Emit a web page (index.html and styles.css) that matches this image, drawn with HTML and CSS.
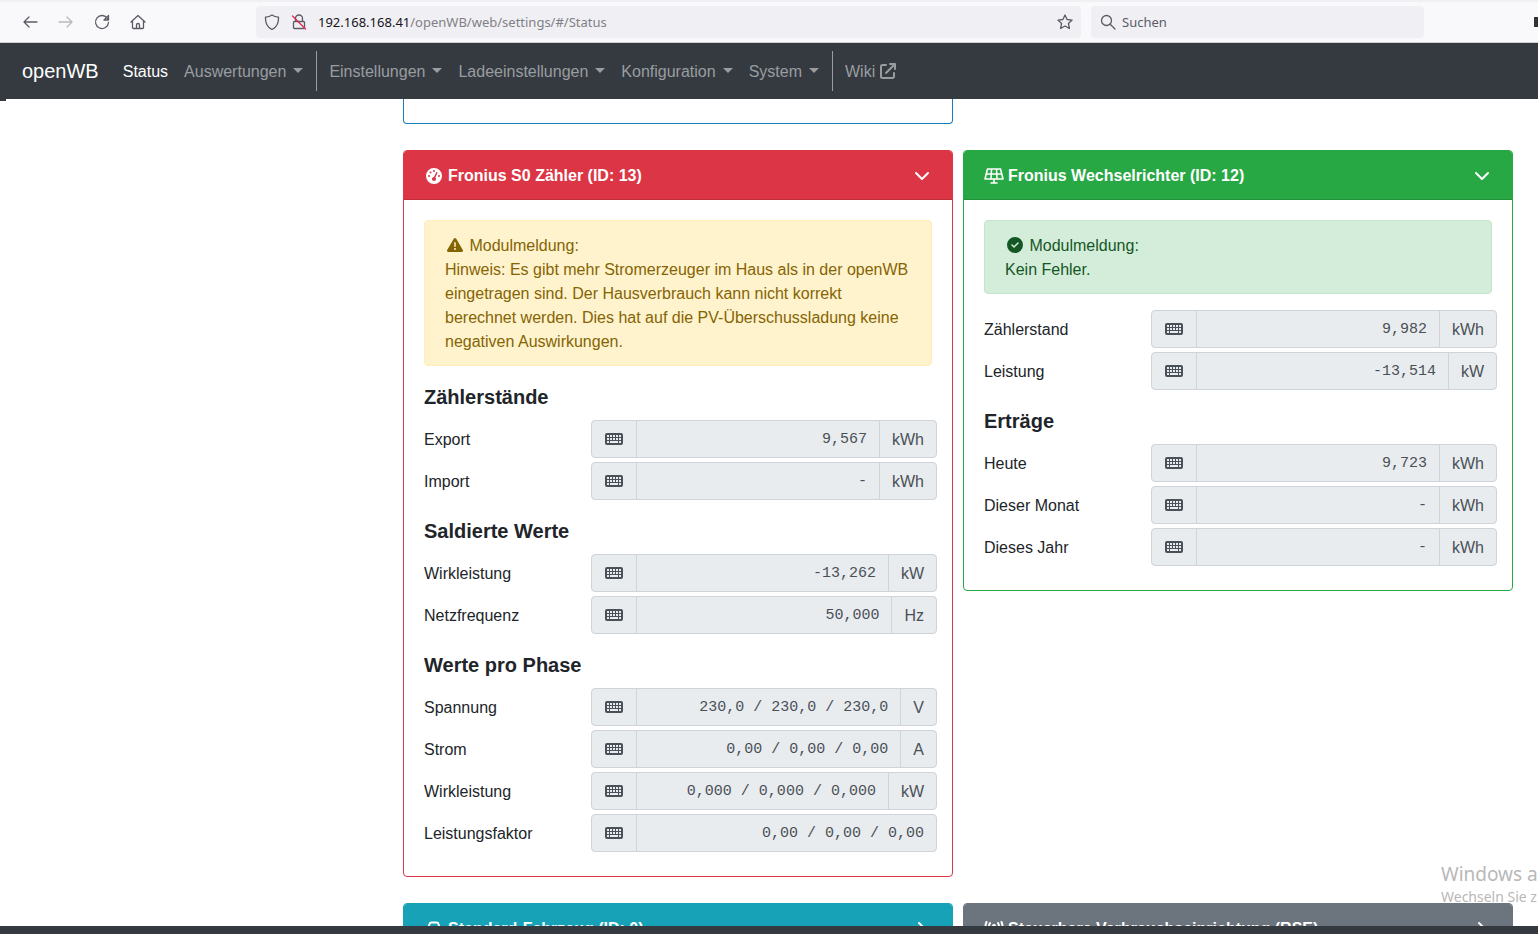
FILE: index.html
```
<!DOCTYPE html>
<html lang="de">
<head>
    <meta charset="UTF-8">
    <meta name="viewport" content="width=device-width, initial-scale=1.0">
    <title>openWB - Status</title>
    <link rel="stylesheet" href="styles.css">
</head>
<body>

    <!-- shared icons -->
    <svg class="sprite" aria-hidden="true">
        <symbol id="keyboard" viewBox="0 0 18 12">
            <path fill-rule="evenodd" d="M2 0h14a2 2 0 0 1 2 2v8a2 2 0 0 1-2 2H2a2 2 0 0 1-2-2V2a2 2 0 0 1 2-2zM2 2v2h2V2zM5 2v2h2V2zM8 2v2h2V2zM11 2v2h2V2zM14 2v2h2V2zM2 5v2h2V5zM5 5v2h2V5zM8 5v2h2V5zM11 5v2h2V5zM14 5v2h2V5zM2 8v2h2V8zM5 8v2h8V8zM14 8v2h2V8z"/>
        </symbol>
        <symbol id="chevron-down" viewBox="0 0 16 16">
            <path d="M2 5l6 6 6-6" fill="none" stroke="currentColor" stroke-width="2" stroke-linecap="round" stroke-linejoin="round"/>
        </symbol>
        <symbol id="chevron-right" viewBox="0 0 16 16">
            <path d="M5 2l6 6-6 6" fill="none" stroke="currentColor" stroke-width="2" stroke-linecap="round" stroke-linejoin="round"/>
        </symbol>
    </svg>

    <div class="toolbar">
        <button class="tool" aria-label="Zurück"><svg viewBox="0 0 16 16"><path d="M15 8H2M7 3L2 8l5 5"/></svg></button>
        <button class="tool" aria-label="Vor" disabled><svg viewBox="0 0 16 16"><path d="M1 8h13M9 3l5 5-5 5"/></svg></button>
        <button class="tool" aria-label="Neu laden"><svg viewBox="0 0 16 16"><path d="M13.500 4.500a6.500 6.500 0 1 0 1 4M14.500 1.500v4.500H10z"/></svg></button>
        <button class="tool" aria-label="Startseite"><svg viewBox="0 0 16 16"><path d="M1 8l7-6.500L15 8M2.500 7v6.500a1 1 0 0 0 1 1h9a1 1 0 0 0 1-1V7M6.500 14.500V11a1.500 1.500 0 0 1 3 0v3.500"/></svg></button>
        <div class="urlbar">
            <svg viewBox="0 0 16 16"><path d="M8 1c2 1.500 4 2 6.500 2.200C14.800 9 12.500 13.500 8 15.500 3.500 13.500 1.200 9 1.500 3.200 4 3 6 2.500 8 1z"/></svg>
            <svg viewBox="0 0 16 16"><path d="M4.500 7V4.500a3.500 3.500 0 0 1 7 0V7M3.500 7.500h9a1 1 0 0 1 1 1v5a1 1 0 0 1-1 1h-9a1 1 0 0 1-1-1v-5a1 1 0 0 1 1-1z"/><path class="strike" d="M1.500 2l13 13"/></svg>
            <div class="url" role="textbox" aria-label="Adresse" contenteditable="true" spellcheck="false"><b>192.168.168.41</b>/openWB/web/settings/#/Status</div>
            <button class="star" aria-label="Lesezeichen"><svg viewBox="0 0 16 16"><path d="M8 1l2.100 4.500 5 .6-3.700 3.400 1 5L8 12l-4.400 2.500 1-5L.9 6.100l5-.6z"/></svg></button>
        </div>
        <div class="search">
            <svg viewBox="0 0 16 16"><circle cx="6.500" cy="6.500" r="5"/><path d="M10.200 10.200L15 15"/></svg>
            <input type="text" placeholder="Suchen" aria-label="Suchen">
        </div>
        <span class="pocket"></span>
    </div>

    <nav class="navbar">
        <a class="brand" href="#">openWB</a>
        <a class="active" href="#/Status">Status</a>
        <a class="dropdown" href="#">Auswertungen</a>
        <span class="divider"></span>
        <a class="dropdown" href="#">Einstellungen</a>
        <a class="dropdown" href="#">Ladeeinstellungen</a>
        <a class="dropdown" href="#">Konfiguration</a>
        <a class="dropdown" href="#">System</a>
        <span class="divider"></span>
        <a href="#">Wiki <svg viewBox="0 0 16 16"><path d="M6 2H2.500A1.500 1.500 0 0 0 1 3.500v10A1.500 1.500 0 0 0 2.500 15h10a1.500 1.500 0 0 0 1.500-1.500V10M10 1h5v5M14.500 1.500L6 10"/></svg></a>
    </nav>

    <main class="content">
        <div class="cards">
            <section class="card blue"></section>
            <span></span>

            <section class="card red">
                <button class="card-header">
                    <svg class="icon" viewBox="0 0 512 512"><path fill-rule="evenodd" d="M0 256a256 256 0 1 1 512 0A256 256 0 1 1 0 256zM288 96a32 32 0 1 0 -64 0 32 32 0 1 0 64 0zM256 416c35.3 0 64-28.7 64-64c0-17.4-6.9-33.1-18.1-44.6L366 161.7c5.3-12.1-.2-26.3-12.3-31.6s-26.3 .2-31.6 12.3L257.9 288c-.6 0-1.3 0-1.9 0c-35.3 0-64 28.7-64 64s28.7 64 64 64zM176 144a32 32 0 1 0 -64 0 32 32 0 1 0 64 0zM96 288a32 32 0 1 0 0-64 32 32 0 1 0 0 64zm352-32a32 32 0 1 0 -64 0 32 32 0 1 0 64 0z"/></svg>
                    <span>Fronius S0 Zähler (ID: 13)</span>
                    <svg class="chevron"><use href="#chevron-down"/></svg>
                </button>
                <div class="card-body">
                    <div class="alert warning">
                        <svg class="icon" viewBox="0 0 512 512"><path fill-rule="evenodd" d="M256 32c14.2 0 27.3 7.5 34.5 19.8l216 368c7.3 12.4 7.3 27.7 .2 40.1S486.3 480 472 480L40 480c-14.3 0-27.6-7.7-34.7-20.1s-7-27.8 .2-40.1l216-368C228.7 39.5 241.8 32 256 32zm0 128c-13.3 0-24 10.7-24 24l0 112c0 13.3 10.7 24 24 24s24-10.7 24-24l0-112c0-13.3-10.7-24-24-24zm32 224a32 32 0 1 0 -64 0 32 32 0 1 0 64 0z"/></svg>
                        Modulmeldung:<br>
                        Hinweis: Es gibt mehr Stromerzeuger im Haus als in der openWB eingetragen sind. Der Hausverbrauch kann nicht korrekt berechnet werden. Dies hat auf die PV-Überschussladung keine negativen Auswirkungen.
                    </div>

                    <h2>Zählerstände</h2>
                    <div class="row">
                        <label for="export">Export</label>
                        <div class="group">
                            <span class="addon"><svg><use href="#keyboard"/></svg></span>
                            <input type="text" id="export" value="9,567" readonly>
                            <span class="addon">kWh</span>
                        </div>
                    </div>
                    <div class="row">
                        <label for="import">Import</label>
                        <div class="group">
                            <span class="addon"><svg><use href="#keyboard"/></svg></span>
                            <input type="text" id="import" value="-" readonly>
                            <span class="addon">kWh</span>
                        </div>
                    </div>

                    <h2>Saldierte Werte</h2>
                    <div class="row">
                        <label for="power">Wirkleistung</label>
                        <div class="group">
                            <span class="addon"><svg><use href="#keyboard"/></svg></span>
                            <input type="text" id="power" value="-13,262" readonly>
                            <span class="addon">kW</span>
                        </div>
                    </div>
                    <div class="row">
                        <label for="frequency">Netzfrequenz</label>
                        <div class="group">
                            <span class="addon"><svg><use href="#keyboard"/></svg></span>
                            <input type="text" id="frequency" value="50,000" readonly>
                            <span class="addon">Hz</span>
                        </div>
                    </div>

                    <h2>Werte pro Phase</h2>
                    <div class="row">
                        <label for="voltages">Spannung</label>
                        <div class="group">
                            <span class="addon"><svg><use href="#keyboard"/></svg></span>
                            <input type="text" id="voltages" value="230,0 / 230,0 / 230,0" readonly>
                            <span class="addon">V</span>
                        </div>
                    </div>
                    <div class="row">
                        <label for="currents">Strom</label>
                        <div class="group">
                            <span class="addon"><svg><use href="#keyboard"/></svg></span>
                            <input type="text" id="currents" value="0,00 / 0,00 / 0,00" readonly>
                            <span class="addon">A</span>
                        </div>
                    </div>
                    <div class="row">
                        <label for="powers">Wirkleistung</label>
                        <div class="group">
                            <span class="addon"><svg><use href="#keyboard"/></svg></span>
                            <input type="text" id="powers" value="0,000 / 0,000 / 0,000" readonly>
                            <span class="addon">kW</span>
                        </div>
                    </div>
                    <div class="row">
                        <label for="factors">Leistungsfaktor</label>
                        <div class="group">
                            <span class="addon"><svg><use href="#keyboard"/></svg></span>
                            <input type="text" id="factors" value="0,00 / 0,00 / 0,00" readonly>
                        </div>
                    </div>
                </div>
            </section>

            <section class="card green">
                <button class="card-header">
                    <svg class="icon wide" viewBox="0 0 20 16"><path d="M3.500 1h13l2.500 10H1zM2.500 6h15M7.500 1L7 11M12.500 1l.5 10M10 11v4M7 15h6" fill="none" stroke="currentColor" stroke-width="1.6" stroke-linejoin="round" stroke-linecap="round"/></svg>
                    <span>Fronius Wechselrichter (ID: 12)</span>
                    <svg class="chevron"><use href="#chevron-down"/></svg>
                </button>
                <div class="card-body">
                    <div class="alert success">
                        <svg class="icon" viewBox="0 0 512 512"><path fill-rule="evenodd" d="M256 512A256 256 0 1 0 256 0a256 256 0 1 0 0 512zM369 209L241 337c-9.4 9.4-24.6 9.4-33.9 0l-64-64c-9.4-9.4-9.4-24.6 0-33.9s24.6-9.4 33.9 0l47 47L335 175c9.4-9.4 24.6-9.4 33.9 0s9.4 24.6 0 33.9z"/></svg>
                        Modulmeldung:<br>
                        Kein Fehler.
                    </div>

                    <div class="row">
                        <label for="counter">Zählerstand</label>
                        <div class="group">
                            <span class="addon"><svg><use href="#keyboard"/></svg></span>
                            <input type="text" id="counter" value="9,982" readonly>
                            <span class="addon">kWh</span>
                        </div>
                    </div>
                    <div class="row">
                        <label for="pv-power">Leistung</label>
                        <div class="group">
                            <span class="addon"><svg><use href="#keyboard"/></svg></span>
                            <input type="text" id="pv-power" value="-13,514" readonly>
                            <span class="addon">kW</span>
                        </div>
                    </div>

                    <h2>Erträge</h2>
                    <div class="row">
                        <label for="today">Heute</label>
                        <div class="group">
                            <span class="addon"><svg><use href="#keyboard"/></svg></span>
                            <input type="text" id="today" value="9,723" readonly>
                            <span class="addon">kWh</span>
                        </div>
                    </div>
                    <div class="row">
                        <label for="month">Dieser Monat</label>
                        <div class="group">
                            <span class="addon"><svg><use href="#keyboard"/></svg></span>
                            <input type="text" id="month" value="-" readonly>
                            <span class="addon">kWh</span>
                        </div>
                    </div>
                    <div class="row">
                        <label for="year">Dieses Jahr</label>
                        <div class="group">
                            <span class="addon"><svg><use href="#keyboard"/></svg></span>
                            <input type="text" id="year" value="-" readonly>
                            <span class="addon">kWh</span>
                        </div>
                    </div>
                </div>
            </section>

            <section class="card cyan">
                <button class="card-header">
                    <svg class="icon" viewBox="0 0 16 16"><path d="M2 8l1.500-5a2 2 0 0 1 2-1.500h5a2 2 0 0 1 2 1.500L14 8M1 8h14v5H1zM2.500 13v2M13.500 13v2" fill="none" stroke="currentColor" stroke-width="2" stroke-linejoin="round" stroke-linecap="round"/></svg>
                    <span>Standard-Fahrzeug (ID: 0)</span>
                    <svg class="chevron"><use href="#chevron-right"/></svg>
                </button>
            </section>

            <section class="card gray">
                <button class="card-header">
                    <svg class="icon wide" viewBox="0 0 20 16"><path d="M2.500 1a11 11 0 0 0 0 9M17.500 1a11 11 0 0 1 0 9M6 2a7 7 0 0 0 0 7M14 2a7 7 0 0 1 0 7M10 6v9" fill="none" stroke="currentColor" stroke-width="2" stroke-linecap="round"/><circle cx="10" cy="5" r="2"/></svg>
                    <span>Steuerbare Verbrauchseinrichtung (RSE)</span>
                    <svg class="chevron"><use href="#chevron-right"/></svg>
                </button>
            </section>
        </div>
    </main>

    <footer class="footer"></footer>

    <div class="watermark">
        <p class="big">Windows a</p>
        <p>Wechseln Sie z</p>
    </div>

</body>
</html>
```

FILE: styles.css
```
* {
    box-sizing: border-box;
}
body {
    margin: 0;
    height: 100vh;
    display: flex;
    flex-direction: column;
    overflow: hidden;
    font-family: "Liberation Sans", Arial, sans-serif;
    font-size: 16px;
    line-height: 24px;
    color: #212529;
    background: #fff;
}
button, input {
    font: inherit;
    color: inherit;
    border: 0;
    padding: 0;
    margin: 0;
    background: none;
}
svg {
    width: 16px;
    height: 16px;
    fill: currentColor;
}
.sprite {
    position: absolute;
    width: 0;
    height: 0;
}

/* browser toolbar */
.toolbar {
    display: flex;
    align-items: center;
    height: 43px;
    padding-left: 12px;
    background: #f9f9fb;
    border-top: 2px solid #f0f0f4;
    border-bottom: 1px solid #ccd0d0;
    font-family: "Noto Sans", sans-serif;
    font-size: 13px;
    color: #5b5b66;
}
.toolbar svg {
    flex: none;
    display: block;
    fill: none;
    stroke: #5b5b66;
    stroke-width: 1.3;
    stroke-linejoin: round;
    stroke-linecap: round;
}
.tool {
    display: flex;
    align-items: center;
    justify-content: center;
    width: 36px;
    height: 32px;
}
.tool:disabled {
    opacity: 0.4;
}
.urlbar, .search {
    display: flex;
    align-items: center;
    height: 32px;
    background: #f0f0f4;
    border-radius: 4px;
}
.urlbar {
    flex: 1;
    gap: 11px;
    margin: 0 10px 0 100px;
    padding: 0 8px;
}
.url {
    flex: 1;
    color: #808086;
    white-space: nowrap;
}
.url b {
    font-weight: normal;
    color: #15141a;
}
.search {
    width: 333px;
    gap: 6px;
    padding: 0 9px;
}
.search input {
    flex: 1;
    min-width: 0;
}
.search input::placeholder {
    color: #5b5b66;
    opacity: 1;
}
.pocket {
    width: 4px;
    height: 10px;
    margin-left: 110px;
    background: #333;
}
.urlbar .strike {
    stroke: #e22850;
}

/* navigation */
.navbar {
    position: relative;
    flex: none;
    display: flex;
    align-items: center;
    height: 56px;
    padding: 0 22px;
    background: #343a40;
}
/* dark window edge, a little below the bar */
.navbar::after {
    content: "";
    position: absolute;
    left: 0;
    top: 100%;
    width: 6px;
    height: 2px;
    background: #343a40;
}
.navbar a {
    padding: 9px 8px 7px;
    color: #9a9da0;
    text-decoration: none;
    white-space: nowrap;
}
.navbar .brand {
    padding: 0;
    margin-right: 16px;
    font-size: 20px;
    color: #fff;
}
.navbar .active {
    color: #fff;
}
.navbar svg {
    vertical-align: -2px;
    fill: none;
    stroke: currentColor;
    stroke-width: 2;
    stroke-linecap: round;
    stroke-linejoin: round;
}
.dropdown::after {
    content: "";
    display: inline-block;
    margin-left: 7px;
    vertical-align: 4px;
    border: 5px solid transparent;
    border-top-color: currentColor;
    border-bottom: 0;
}
.divider {
    width: 1px;
    height: 40px;
    margin: 0 4px 0 5px;
    background: #9a9da0;
}

/* cards */
.content {
    flex: 1;
    min-height: 0;
    overflow: hidden;
    padding: 0 25px 0 403px;
}
.cards {
    display: grid;
    grid-template-columns: 1fr 1fr;
    gap: 26px 10px;
    align-items: start;
}
.card {
    border: 1px solid;
    border-radius: 4px;
    overflow: hidden;
}
.card-header {
    display: flex;
    align-items: center;
    gap: 4px;
    width: 100%;
    padding: 13px 20px 11px;
    border-bottom: 1px solid rgba(0,0,0,0.125);
    font-weight: bold;
    color: #fff;
    cursor: pointer;
}
.card-header .chevron {
    margin-left: auto;
    margin-right: 2px;
}
.card-body {
    padding: 20px;
}
.blue {
    height: 25px;
    border-color: #1a7bbf;
    border-top: 0;
    border-radius: 0 0 4px 4px;
}
.red {
    border-color: #dc3545;
}
.red .card-header {
    background: #dc3545;
}
.green {
    border-color: #28a745;
}
.green .card-header {
    background: #28a745;
}
.cyan {
    border-color: #17a2b8;
}
.cyan .card-header {
    background: #17a2b8;
}
.gray {
    border-color: #6c757d;
}
.gray .card-header {
    background: #6c757d;
}
.icon {
    margin: 0 2px;
    vertical-align: -2px;
}
.wide {
    width: 20px;
    margin: 0;
}
h2 {
    margin: 16px 0 8px;
    font-size: 20px;
    line-height: 30px;
}

/* module message */
.alert {
    margin-bottom: 16px;
    padding: 13px 20px 11px;
    border: 1px solid;
    border-radius: 4px;
}
.warning {
    color: #856404;
    background: #fff3cd;
    border-color: #ffeeba;
}
.success {
    color: #155724;
    background: #d4edda;
    border-color: #c3e6cb;
}

/* values */
.row {
    display: grid;
    grid-template-columns: 1fr 2fr;
    align-items: center;
    margin: 0 -5px 4px -6px;
}
.row label {
    padding: 2px 0 0 6px;
}
.group {
    display: flex;
    height: 38px;
    background: #e9ecef;
    border: 1px solid #ced4da;
    border-radius: 4px;
    color: #495057;
}
.group input {
    flex: 1;
    min-width: 0;
    padding: 2px 12px 0;
    border-left: 1px solid #ced4da;
    font-family: "Liberation Mono", monospace;
    font-size: 15px;
    text-align: right;
}
.addon {
    display: flex;
    align-items: center;
    padding: 0 12px;
}
.addon svg {
    width: 18px;
    height: 12px;
    margin: 0 1px;
}
.group input + .addon {
    padding-top: 2px;
    border-left: 1px solid #ced4da;
}

.footer {
    flex: none;
    height: 8px;
    background: #343a40;
}

/* system notice over the page */
.watermark {
    position: absolute;
    right: 0;
    bottom: 27px;
    width: 97px;
    overflow: hidden;
    white-space: nowrap;
    font-family: "Noto Sans", sans-serif;
    font-size: 14px;
    line-height: 20px;
    color: #b8b8b8;
    pointer-events: none;
}
.watermark p {
    margin: 0;
}
.watermark .big {
    font-size: 19px;
    line-height: 26px;
}
```
